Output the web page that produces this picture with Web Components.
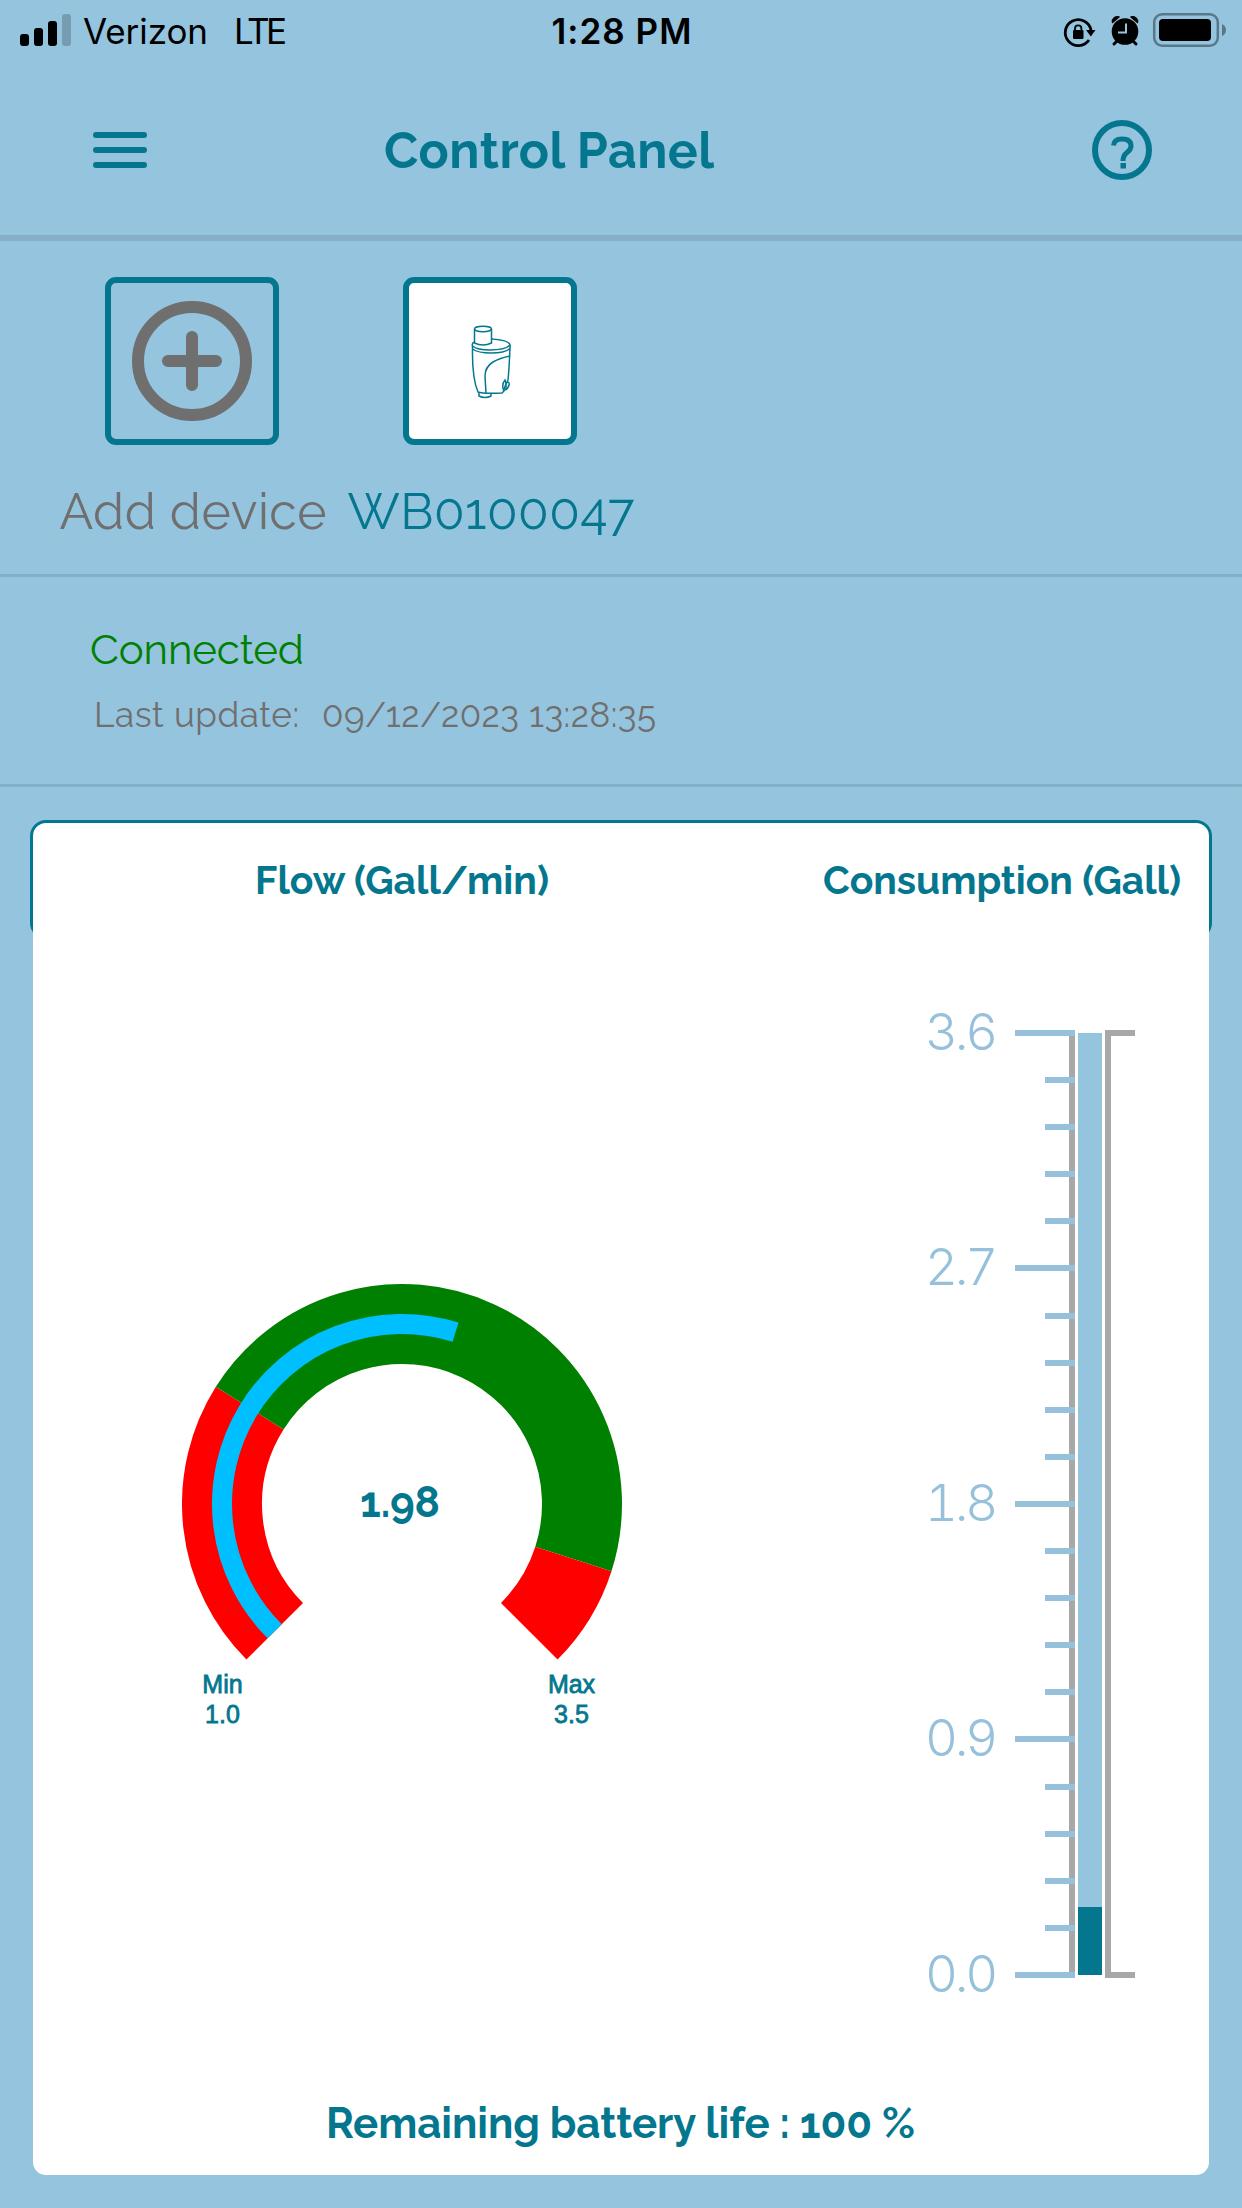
<!DOCTYPE html>
<html lang="en">
<head>
<meta charset="utf-8">
<title>Control Panel</title>
<style>
  body {
    margin: 0;
    width: 1242px;
    height: 2208px;
    overflow: hidden;
    background: #95c4de;
    color: #04778f;
    font-family: Raleway, Lato, "Open Sans", sans-serif;
  }
</style>
</head>
<body>
<control-panel></control-panel>

<script>
  const TEAL = '#04778f';
  const SKY = '#95c4de';

  function attach(el, html) {
    const template = document.createElement('template');
    template.innerHTML = html;
    el.attachShadow({ mode: 'open' });
    el.shadowRoot.appendChild(template.content.cloneNode(true));
  }

  // one line of text, tracked so that it fills the given width
  class FitLabel extends HTMLElement {
    constructor() {
      super();
      attach(this, `
        <style>
          :host { display: block; white-space: nowrap; }
          span { display: inline-block; }
        </style>
        <span><slot></slot></span>`);
    }

    connectedCallback() {
      const want = Number(this.getAttribute('width'));
      const span = this.shadowRoot.querySelector('span');
      const count = this.textContent.length;
      const gap = (want - span.getBoundingClientRect().width) / (count - 1);
      span.style.letterSpacing = gap + 'px';
      span.style.marginRight = -gap + 'px';
    }
  }

  class StatusBar extends HTMLElement {
    constructor() {
      super();
      attach(this, `
        <style>
          :host {
            display: grid;
            grid-template-columns: 1fr auto 1fr;
            align-items: center;
            height: 62px;
            padding: 0 19px 0 20px;
            color: #000;
            font: 400 35px/62px Inter, "Liberation Sans", sans-serif;
          }
          .left { display: flex; align-items: center; }
          .left svg { margin-right: 12px; }
          .lte { margin-left: 26px; }
          .time { font-weight: 600; }
          .right { display: flex; justify-content: flex-end; align-items: center; }
          svg { display: block; }
        </style>
        <div class="left">
          <svg width="51" height="62">
            <rect x="0" y="34" width="9" height="12" rx="3"/>
            <rect x="14" y="28" width="9" height="18" rx="3"/>
            <rect x="28" y="21" width="9" height="25" rx="3"/>
            <rect x="42" y="14" width="9" height="32" rx="3" opacity=".2"/>
          </svg>
          <fit-label width="125">Verizon</fit-label>
          <fit-label class="lte" width="53">LTE</fit-label>
        </div>
        <fit-label class="time" width="140">1:28 PM</fit-label>
        <div class="right">
          <svg width="163" height="62" viewBox="1060 0 163 62" overflow="visible">
            <path d="M1089 40A13 13 0 1 1 1091 30" fill="none" stroke="#000" stroke-width="2.8"/>
            <path d="M1086 30h9.500l-4.700 6.500z"/>
            <rect x="1073" y="30" width="10.500" height="9" rx="1"/>
            <path d="M1075 31v-2.500a3.200 3.200 0 0 1 6.400 0v2.500" fill="none" stroke="#000" stroke-width="1.800"/>
            <circle cx="1125" cy="31.500" r="13.300"/>
            <path d="M1112.500 22.500a5 5 0 0 1 6.500-5.500zM1137.500 22.500a5 5 0 0 0-6.500-5.500z" stroke="#000" stroke-width="1.500" stroke-linejoin="round"/>
            <path d="M1117 41l-3 3M1133 41l3 3" stroke="#000" stroke-width="3" stroke-linecap="round"/>
            <path d="M1126 23.500v9h-8" fill="none" stroke="${SKY}" stroke-width="2"/>
            <rect x="1154.200" y="14.200" width="63.600" height="31.600" rx="8" fill="none" stroke="#58788a" stroke-width="2.500"/>
            <rect x="1159" y="19" width="52" height="22" rx="4"/>
            <path d="M1222 24q4 2 4 6t-4 6z" fill="#58788a"/>
          </svg>
        </div>`);
    }
  }

  class AppHeader extends HTMLElement {
    constructor() {
      super();
      attach(this, `
        <style>
          :host {
            display: flex;
            align-items: center;
            height: 173px;
            padding: 0 90px 0 93px;
            border-bottom: 6px solid #86aec9;
            font-size: 50px;
            font-weight: 700;
            line-height: 60px;
          }
          svg { display: block; }
          .title { flex: 1; padding: 4px 0 0 237px; }
        </style>
        <svg width="54" height="39" fill="${TEAL}">
          <rect y="3" width="54" height="6" rx="3"/>
          <rect y="18" width="54" height="6" rx="3"/>
          <rect y="33" width="54" height="6" rx="3"/>
        </svg>
        <fit-label class="title" width="330">Control Panel</fit-label>
        <svg width="60" height="62" fill="none" stroke="${TEAL}">
          <circle cx="30" cy="32" r="27" stroke-width="6"/>
          <path d="M21.500 27.500Q22 21 30 21Q39 21 39 28Q39 31.500 35 34.500Q31 37.500 31 43" stroke-width="5"/>
          <rect x="28.500" y="45" width="5.500" height="5.500" fill="${TEAL}" stroke="none"/>
        </svg>`);
    }
  }

  class DeviceTile extends HTMLElement {
    constructor() {
      super();
      attach(this, `
        <style>
          :host { display: flex; flex-direction: column; align-items: center; width: 298px; }
          .box {
            box-sizing: border-box;
            flex: none;
            width: 174px;
            height: 168px;
            border: 6px solid ${TEAL};
            border-radius: 11px;
            background: var(--tile, transparent);
            display: flex;
            align-items: center;
            justify-content: center;
          }
          .label { margin: 37px 0 0 2px; font-size: 50px; line-height: 60px; }
        </style>
        <div class="box"><slot name="icon"></slot></div>
        <div class="label"><slot></slot></div>`);
    }
  }

  class FlowGauge extends HTMLElement {
    constructor() {
      super();
      // angles are degrees clockwise from twelve o'clock
      const at = (r, a) => {
        const t = a * Math.PI / 180;
        return (220 + r * Math.sin(t)).toFixed(2) + ' ' + (220 - r * Math.cos(t)).toFixed(2);
      };
      const arc = (r, from, to, width, colour) => {
        const large = to - from > 180 ? 1 : 0;
        return `<path d="M${at(r, from)}A${r} ${r} 0 ${large} 1 ${at(r, to)}" fill="none" stroke="${colour}" stroke-width="${width}"/>`;
      };
      attach(this, `
        <style>
          :host { display: grid; width: 440px; justify-items: center; align-content: start; }
          svg, .value { grid-area: 1 / 1; }
          .value { align-self: start; margin-top: 194px; padding-right: 3px; font-size: 42px; line-height: 50px; }
          .ends {
            grid-area: 2 / 1;
            display: flex;
            justify-content: space-between;
            width: 397px;
            margin-right: 9px;
            font: 400 25px/30px "Liberation Sans", Arial, sans-serif;
            -webkit-text-stroke: .8px ${TEAL};
            text-align: center;
          }
          .ends div { width: 48px; white-space: nowrap; }
          svg { display: block; }
        </style>
        <svg width="440" height="385">
          ${arc(180, -135, -57.800, 80, '#f00')}
          ${arc(180, -57.800, 107.800, 80, '#008000')}
          ${arc(180, 107.800, 135, 80, '#f00')}
          ${arc(180, -135, 17.300, 20, '#00bfff')}
        </svg>
        <fit-label class="value" width="80">1.98</fit-label>
        <div class="ends">
          <div>Min<br>1.0</div>
          <div>Max<br>3.5</div>
        </div>`);
    }
  }

  class LevelScale extends HTMLElement {
    constructor() {
      super();
      let ticks = '';
      let labels = '';
      for (let i = 0; i <= 20; i++) {
        const y = Math.round(32.9 + i * 47.1);
        const x = i % 5 ? 125 : 95;
        ticks += `<rect x="${x}" y="${y - 3}" width="${155 - x}" height="6"/>`;
        if (i % 5 === 0) {
          labels += `<text x="75" y="${y + 16.500}">${(3.6 - i * 0.18).toFixed(1)}</text>`;
        }
      }
      attach(this, `
        <style>
          :host { display: block; }
          svg { display: block; }
          text {
            font: 360 51px Inter, "Liberation Sans", sans-serif;
            font-variant-numeric: tabular-nums;
            text-anchor: end;
            letter-spacing: -3.2px;
          }
        </style>
        <svg width="220" height="1010">
          <path d="M152 33V975" stroke="#a8a8a8" stroke-width="6"/>
          <path d="M215 33H188V975H215" fill="none" stroke="#a8a8a8" stroke-width="6"/>
          <rect x="158" y="33" width="24" height="942" fill="${SKY}"/>
          <rect x="158" y="907" width="24" height="68" fill="${TEAL}"/>
          <g fill="#97c1db">${ticks}${labels}</g>
        </svg>`);
    }
  }

  class ReadingCard extends HTMLElement {
    constructor() {
      super();
      attach(this, `
        <style>
          :host {
            display: grid;
            grid-template-columns: 737px 439px;
            grid-template-rows: 177px 1fr 120px;
            position: relative;
            width: 1176px;
            height: 1352px;
            margin: 36px auto 0;
            border-radius: 13px;
            background: #fff;
            font-weight: 700;
          }
          /* outlined heading strip behind the white sheet */
          .strip {
            position: absolute;
            z-index: -1;
            inset: -3px -3px auto;
            height: 119px;
            border-radius: 16px;
            background: ${TEAL};
          }
          .head { font-size: 39px; line-height: 50px; padding-top: 32px; }
          .flow { justify-self: center; padding-left: 1px; }
          .use { padding-left: 53px; }
          flow-gauge { justify-self: center; margin-top: 284px; }
          level-scale { margin-left: 150px; }
          .foot { grid-column: 1 / -1; justify-self: center; font-size: 42px; line-height: 60px; padding: 39px 1px 0 0; }
        </style>
        <div class="strip"></div>
        <fit-label class="head flow" width="294">Flow (Gall/min)</fit-label>
        <fit-label class="head use" width="358">Consumption (Gall)</fit-label>
        <flow-gauge></flow-gauge>
        <level-scale></level-scale>
        <fit-label class="foot" width="589">Remaining battery life : 100 %</fit-label>`);
    }
  }

  class ControlPanel extends HTMLElement {
    constructor() {
      super();
      attach(this, `
        <style>
          :host { display: block; position: relative; z-index: 0; }
          svg { display: block; }
          .devices {
            display: flex;
            height: 297px;
            padding: 36px 0 0 43px;
            border-bottom: 3px solid #83afc9;
          }
          .add { color: #706f6f; }
          .status {
            height: 207px;
            border-bottom: 3px solid #83afc9;
            padding-left: 90px;
          }
          .online { padding-top: 43px; color: #008000; font-size: 42px; line-height: 60px; }
          .updated { display: flex; gap: 23px; padding: 10px 0 0 4px; color: #706f6f; font-size: 35px; line-height: 50px; }
        </style>
        <status-bar></status-bar>
        <app-header></app-header>
        <div class="devices">
          <device-tile class="add">
            <svg slot="icon" width="120" height="120" fill="none" stroke="#706f6f" stroke-width="12" stroke-linecap="round">
              <circle cx="60" cy="60" r="54"/>
              <path d="M60 36V84M36 60H84"/>
            </svg>
            <fit-label width="267">Add device</fit-label>
          </device-tile>
          <device-tile style="--tile: #fff">
            <svg slot="icon" width="100" height="120" viewBox="0 0 100 120" fill="none" stroke="${TEAL}" stroke-width="1.500">
              <ellipse cx="43" cy="28" rx="8.500" ry="2.700"/>
              <path d="M34.500 28V42Q43 46 51.500 42V28"/>
              <path d="M34.500 41Q31.500 42 32.500 45Q37 49 50 49Q66 49 70 44Q69 39 51.500 38"/>
              <path d="M32.500 45V48Q38 52 51 52Q65 52 70 47.500V44M32.500 48Q32 77 38 91Q43 93 62 92L64 90Q64 86 68 79Q69 70 70 47"/>
              <path d="M70 55Q60 57 53 61Q45 66 45 75L46 92M39 91V95Q45 98 51 95V92"/>
              <path d="M64 90Q61 84 65 79L66 82V88M66 82Q70 80 69 84Q68 88 65 89"/>
            </svg>
            <fit-label width="287">WB0100047</fit-label>
          </device-tile>
        </div>
        <div class="status">
          <fit-label class="online" width="214">Connected</fit-label>
          <div class="updated">
            <fit-label width="205">Last update:</fit-label>
            <fit-label width="334">09/12/2023 13:28:35</fit-label>
          </div>
        </div>
        <reading-card></reading-card>`);
    }
  }

  customElements.define('fit-label', FitLabel);
  customElements.define('status-bar', StatusBar);
  customElements.define('app-header', AppHeader);
  customElements.define('device-tile', DeviceTile);
  customElements.define('flow-gauge', FlowGauge);
  customElements.define('level-scale', LevelScale);
  customElements.define('reading-card', ReadingCard);
  customElements.define('control-panel', ControlPanel);
</script>
</body>
</html>
